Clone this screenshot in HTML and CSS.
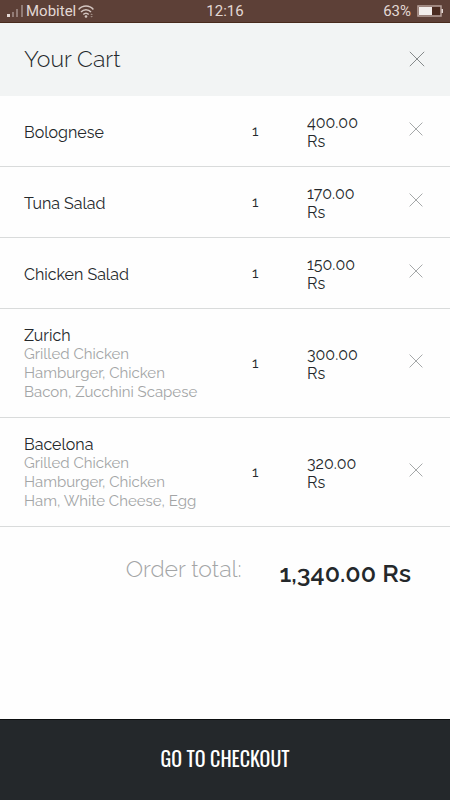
FILE: index.html
```html
<!DOCTYPE html>
<html lang="en">
<head>
  <meta charset="UTF-8" />
  <meta name="viewport" content="width=device-width, initial-scale=1.0" />
  <title>Your Cart</title>
  <link rel="stylesheet" href="styles.css">
</head>
<body>
  <div class="status-bar">
    <div class="carrier">
      <svg class="signal" width="17" height="12" viewBox="0 0 17 12" fill="#e3d8d4">
        <rect x="0" y="9" width="3" height="3" />
        <rect x="5" y="7" width="2" height="5" opacity=".4" />
        <rect x="9" y="4" width="2" height="8" opacity=".4" />
        <rect x="14" y="0" width="2" height="12" opacity=".4" />
      </svg>
      <span>Mobitel</span>
      <svg class="wifi" width="16" height="13" viewBox="0 0 16 13" fill="none" stroke="#d3c5c0" stroke-width="1.5">
        <path d="M.6 4.4C4.6-.1 11.400-.1 15.400 4.400" />
        <path d="M3 7C5.800 3.900 10.200 3.900 13 7" />
        <path d="M5.300 9.500C6.800 7.800 9.200 7.800 10.700 9.500" />
        <circle cx="8" cy="11.500" r="1.300" fill="#d3c5c0" stroke="none" />
        <path d="M12.300 10l1.300-1.500 1.300 1.500zM12.300 11l1.300 1.500 1.300-1.500z" fill="#a08c85" stroke="none" />
      </svg>
    </div>
    <span>12:16</span>
    <div class="power">
      <span>63%</span>
      <svg class="battery" width="26" height="12" viewBox="0 0 26 12">
        <rect x="1" y="1" width="23" height="10" fill="#4a2b20" stroke="#b8a39c" stroke-width="1.500" />
        <rect x="2" y="2" width="13" height="8" fill="#f2eeec" />
        <rect x="24.500" y="4" width="1.500" height="4" fill="#e3d8d4" />
      </svg>
    </div>
  </div>

  <header class="cart-header">
    <h1>Your Cart</h1>
    <button class="close" type="button" aria-label="Close cart">
      <svg width="16" height="16" viewBox="0 0 16 16"><path d="M.8.8l14.400 14.400M15.200.8L.8 15.200" /></svg>
    </button>
  </header>

  <main>
    <table class="cart">
      <colgroup>
        <col class="col-item">
        <col class="col-qty">
        <col class="col-price">
        <col class="col-remove">
      </colgroup>
      <tbody>
        <tr>
          <td class="item">Bolognese</td>
          <td>1</td>
          <td class="price">400.00 Rs</td>
          <td class="remove">
            <button type="button" aria-label="Remove Bolognese"><svg width="14" height="14" viewBox="0 0 14 14"><path d="M.6.6l12.800 12.800M13.400.6L.6 13.400" /></svg></button>
          </td>
        </tr>
        <tr>
          <td class="item">Tuna Salad</td>
          <td>1</td>
          <td class="price">170.00 Rs</td>
          <td class="remove">
            <button type="button" aria-label="Remove Tuna Salad"><svg width="14" height="14" viewBox="0 0 14 14"><path d="M.6.6l12.800 12.800M13.400.6L.6 13.400" /></svg></button>
          </td>
        </tr>
        <tr>
          <td class="item">Chicken Salad</td>
          <td>1</td>
          <td class="price">150.00 Rs</td>
          <td class="remove">
            <button type="button" aria-label="Remove Chicken Salad"><svg width="14" height="14" viewBox="0 0 14 14"><path d="M.6.6l12.800 12.800M13.400.6L.6 13.400" /></svg></button>
          </td>
        </tr>
        <tr>
          <td class="item">Zurich
            <p class="extras">Grilled Chicken<br>Hamburger, Chicken<br>Bacon, Zucchini Scapese</p>
          </td>
          <td>1</td>
          <td class="price">300.00 Rs</td>
          <td class="remove">
            <button type="button" aria-label="Remove Zurich"><svg width="14" height="14" viewBox="0 0 14 14"><path d="M.6.6l12.800 12.800M13.400.6L.6 13.400" /></svg></button>
          </td>
        </tr>
        <tr>
          <td class="item">Bacelona
            <p class="extras">Grilled Chicken<br>Hamburger, Chicken<br>Ham, White Cheese, Egg</p>
          </td>
          <td>1</td>
          <td class="price">320.00 Rs</td>
          <td class="remove">
            <button type="button" aria-label="Remove Bacelona"><svg width="14" height="14" viewBox="0 0 14 14"><path d="M.6.6l12.800 12.800M13.400.6L.6 13.400" /></svg></button>
          </td>
        </tr>
      </tbody>
    </table>

    <div class="total">
      <span class="total-label">Order total:</span>
      <strong class="total-value">1,340.00 Rs</strong>
    </div>
  </main>

  <button class="checkout" type="button">GO TO CHECKOUT</button>
</body>
</html>
```

FILE: styles.css
```css
* {
  box-sizing: border-box;
}
body {
  margin: 0;
  min-height: 100vh;
  display: flex;
  flex-direction: column;
  background: #fefefe;
  color: #24282b;
  font-family: Raleway, "Open Sans", sans-serif;
  font-size: 15px;
  line-height: 19px;
}
button {
  padding: 0;
  border: 0;
  background: none;
  cursor: pointer;
}
svg {
  display: block;
}

/* phone status bar */
.status-bar {
  display: grid;
  grid-template-columns: 1fr auto 1fr;
  align-items: center;
  height: 23px;
  padding: 0 7px;
  background: #5d4037;
  border-bottom: 1px solid #482a1c;
  color: #e3d8d4;
  font-family: Roboto, sans-serif;
  font-size: 15px;
}
.carrier,
.power {
  display: flex;
  align-items: center;
  gap: 2px;
}
.power {
  justify-content: flex-end;
  gap: 6px;
}

.cart-header {
  display: flex;
  justify-content: space-between;
  align-items: center;
  height: 73px;
  padding: 0 25px 2px 24px;
  background: #f2f4f4;
}
.cart-header h1 {
  margin: 0;
  font-size: 23px;
  font-weight: 300;
}
.close svg {
  stroke: #85898a;
}

main {
  flex: 1;
}
.cart {
  width: 100%;
  border-collapse: separate;
  border-spacing: 0;
  table-layout: fixed;
}
.col-item {
  width: 56%;
}
.col-qty {
  width: 12%;
}
.col-price {
  width: 15%;
}
.cart td {
  padding: 16px 0;
  border-bottom: 1px solid #d9dbdb;
  vertical-align: middle;
}
.cart .item {
  padding: 17px 0 15px 24px;
}
.cart .price {
  padding: 17px 8px 15px 1px;
  font-size: 16px;
}
.cart .remove {
  padding: 14px 27px 18px 0;
}
.remove button {
  display: block;
  margin-left: auto;
}
.remove svg {
  stroke: #a5a8a9;
}
.item {
  font-size: 16px;
}
.extras {
  margin: 0;
  color: #a3a5a6;
  font-size: 15px;
}

.total {
  display: flex;
  justify-content: flex-end;
  align-items: flex-start;
  gap: 38px;
  padding: 28px 39px;
}
.total-label {
  color: #a3a5a6;
  font-size: 23px;
  font-weight: 300;
  line-height: 28px;
}
.total-value {
  font-size: 25px;
  font-weight: 600;
  line-height: 36px;
}

.checkout {
  height: 81px;
  padding-bottom: 4px;
  border-top: 1px solid #0c0f10;
  background: #24282b;
  color: #fff;
  font-family: Oswald, "Liberation Sans Narrow", sans-serif;
  font-size: 20px;
}
```
